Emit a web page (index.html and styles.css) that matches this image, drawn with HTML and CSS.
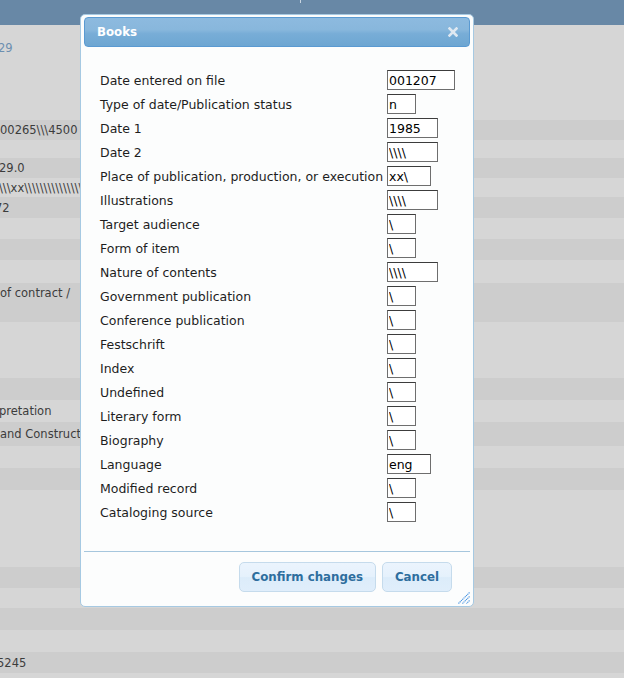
FILE: index.html
```html
<!DOCTYPE html>
<html>
<head>
<meta charset="utf-8">
<link rel="stylesheet" href="styles.css">
</head>
<body>
<div class="page">
  <div class="topbar"><span class="tick"></span></div>
  <div class="row l top"><span class="link shift2">29</span></div>
  <div class="row d"><span>00265\\\4500</span></div>
  <div class="row l"></div>
  <div class="row d"><span class="shift1">29.0</span></div>
  <div class="row l"><span class="shift1">\\\xx\\\\\\\\\\\\\\\\\\\\\\\\\\\\\\\\</span></div>
  <div class="row d"><span class="shift5">72</span></div>
  <div class="row l"></div>
  <div class="row d"></div>
  <div class="row l"></div>
  <div class="row d tall"><span>of contract /</span></div>
  <div class="row l"></div>
  <div class="row d"></div>
  <div class="row l"><span class="shift1">pretation</span></div>
  <div class="row d"><span>and Construction</span></div>
  <div class="row l"></div>
  <div class="row d"></div>
  <div class="row l"></div>
  <div class="row d"></div>
  <div class="row l"></div>
  <div class="row d"></div>
  <div class="row l"></div>
  <div class="row d"><span class="shift3">5245</span></div>
  <div class="row l"></div>
</div>

<div class="dialog">
  <div class="titlebar">
    <span class="title">Books</span>
    <svg class="close" width="10" height="10" viewBox="0 0 10 10"><path d="M1.5 1.5 L8.5 8.5 M8.5 1.5 L1.5 8.5" stroke="#dfe8f1" stroke-width="2.6" stroke-linecap="square"/></svg>
  </div>
  <div class="content">
    <div class="form">
      <label>Date entered on file</label><input class="w6" value="001207">
      <label>Type of date/Publication status</label><input class="w1" value="n">
      <label>Date 1</label><input class="w4" value="1985">
      <label>Date 2</label><input class="w4" value="\\\\">
      <label>Place of publication, production, or execution</label><input class="w3" value="xx\">
      <label>Illustrations</label><input class="w4" value="\\\\">
      <label>Target audience</label><input class="w1" value="\">
      <label>Form of item</label><input class="w1" value="\">
      <label>Nature of contents</label><input class="w4" value="\\\\">
      <label>Government publication</label><input class="w1" value="\">
      <label>Conference publication</label><input class="w1" value="\">
      <label>Festschrift</label><input class="w1" value="\">
      <label>Index</label><input class="w1" value="\">
      <label>Undefined</label><input class="w1" value="\">
      <label>Literary form</label><input class="w1" value="\">
      <label>Biography</label><input class="w1" value="\">
      <label>Language</label><input class="w3" value="eng">
      <label>Modified record</label><input class="w1" value="\">
      <label>Cataloging source</label><input class="w1" value="\">
    </div>
  </div>
  <div class="buttonpane">
    <button class="btn">Confirm changes</button>
    <button class="btn">Cancel</button>
  </div>
  <svg class="grip" width="12" height="12" viewBox="0 0 12 12">
    <path d="M11.5 0.5 L0.5 11.5 M11.5 4.5 L4.5 11.5 M11.5 8.5 L8.5 11.5" stroke="#3d8ee0" stroke-width="1.1" stroke-dasharray="1.2 0.6"/>
  </svg>
</div>
</body>
</html>
```

FILE: styles.css
```css
html, body {
  margin: 0;
  padding: 0;
}
body {
  width: 624px;
  height: 678px;
  overflow: hidden;
  position: relative;
  background: #d6d6d6;
  font-family: "DejaVu Sans", Verdana, sans-serif;
}
.page {
  display: grid;
  grid-template-rows: 25px 95px 20px 18px 20px 19px 21px 21px 21px 23px 39px 56px 22px 22px 24px 22px 22px 77px 21px 20px 22px 22px 21px 1fr;
  height: 678px;
  font-size: 11.5px;
  color: #3c3c3c;
}
.topbar {
  background: #6888a6;
  display: flex;
}
.tick {
  width: 1px;
  height: 3px;
  margin-left: 300px;
  background: #c9d5e1;
}
.row {
  display: flex;
  align-items: center;
  white-space: nowrap;
  overflow: hidden;
}
.row.l { background: #d6d6d6; }
.row.d { background: #cdcdcd; }
.row.top { align-items: flex-start; padding-top: 16px; }
.row.tall { align-items: flex-start; padding-top: 3px; }
.link { color: #6c8fb0; }
.shift1 { margin-left: -1px; }
.shift2 { margin-left: -2px; }
.shift3 { margin-left: -3px; }
.shift5 { margin-left: -5px; }

.dialog {
  position: absolute;
  left: 80px;
  top: 14px;
  width: 394px;
  height: 593px;
  box-sizing: border-box;
  border: 1px solid #a6c9e2;
  border-radius: 5px;
  background: #fcfdfd;
  padding: 2px 3px 3px;
  display: flex;
  flex-direction: column;
}
.titlebar {
  height: 30px;
  box-sizing: border-box;
  border: 1px solid #5a9ad2;
  border-radius: 4px;
  background: linear-gradient(to bottom, #8dbadf 0%, #88b7dc 42%, #78add7 56%, #6da6d2 100%);
  display: flex;
  align-items: center;
  justify-content: space-between;
  padding: 0 11px 0 12px;
}
.title {
  color: #fff;
  font-weight: bold;
  font-size: 11.8px;
}
.close { display: block; }
.content {
  flex: 1;
  padding: 21px 0 0 16px;
}
.form {
  display: grid;
  grid-template-columns: 287px auto;
  grid-auto-rows: 24px;
  align-items: center;
  justify-items: start;
}
.form label {
  font-size: 12.5px;
  color: #1e1e1e;
  white-space: nowrap;
}
.form input {
  height: 20px;
  box-sizing: border-box;
  border: 1px solid #6e6e6e;
  border-top-color: #3c3c3c;
  border-radius: 0;
  padding: 0 1px;
  margin: 0;
  font-family: "DejaVu Sans", Verdana, sans-serif;
  font-size: 12.5px;
  color: #000;
  background: #fff;
  outline: none;
}
.w1 { width: 29px; }
.w3 { width: 44px; }
.w4 { width: 51px; }
.w6 { width: 68px; }

.buttonpane {
  border-top: 1px solid #a6c6dd;
  padding: 10px 18px 11px 0;
  display: flex;
  justify-content: flex-end;
  gap: 6px;
}
.btn {
  height: 30px;
  box-sizing: border-box;
  border: 1px solid #c5dbec;
  border-radius: 5px;
  background: linear-gradient(to bottom, #ebf4fd 0%, #e5f1fc 48%, #dcecfa 52%, #e0eefb 100%);
  color: #2e6e9e;
  font-family: "DejaVu Sans", Verdana, sans-serif;
  font-weight: bold;
  font-size: 11.8px;
  padding: 0 12px;
  margin: 0;
}
.grip {
  position: absolute;
  right: 3px;
  bottom: 2px;
}
```
